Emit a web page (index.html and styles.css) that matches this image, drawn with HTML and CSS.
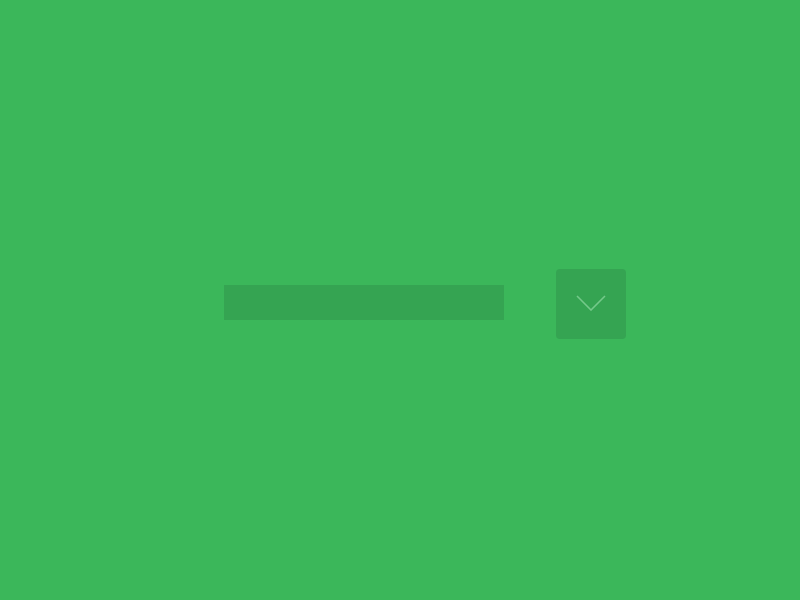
FILE: index.html
```html
<!DOCTYPE html>
<html lang="en">
<head>
  <meta charset="UTF-8">
  <title>Select</title>
  <link rel="stylesheet" href="styles.css">
</head>
<body>
  <div class="picker">
    <div class="field"></div>
    <button class="toggle" aria-label="Open">
      <svg width="30" height="16" viewBox="0 0 30 16">
        <polyline points="1,1 15,15 29,1" fill="none" stroke="#74c98a" stroke-width="1.6"/>
      </svg>
    </button>
  </div>
</body>
</html>
```

FILE: styles.css
```css
* { margin: 0; padding: 0; box-sizing: border-box; font-family: 'Liberation Sans', sans-serif; }
html, body { height: 100%; }
body { background-color: #3bb75a; }
.picker {
  display: flex;
  align-items: center;
  justify-content: center;
  height: 100%;
  padding: 8px 0 0 50px;
  gap: 52px;
}
.field {
  width: 280px;
  height: 35px;
  margin-top: -3px;
  background-color: #35a452;
}
.toggle {
  display: flex;
  align-items: center;
  justify-content: center;
  width: 70px;
  height: 70px;
  padding-bottom: 2px;
  border: none;
  border-radius: 4px;
  background-color: #35a452;
  cursor: pointer;
}
```
